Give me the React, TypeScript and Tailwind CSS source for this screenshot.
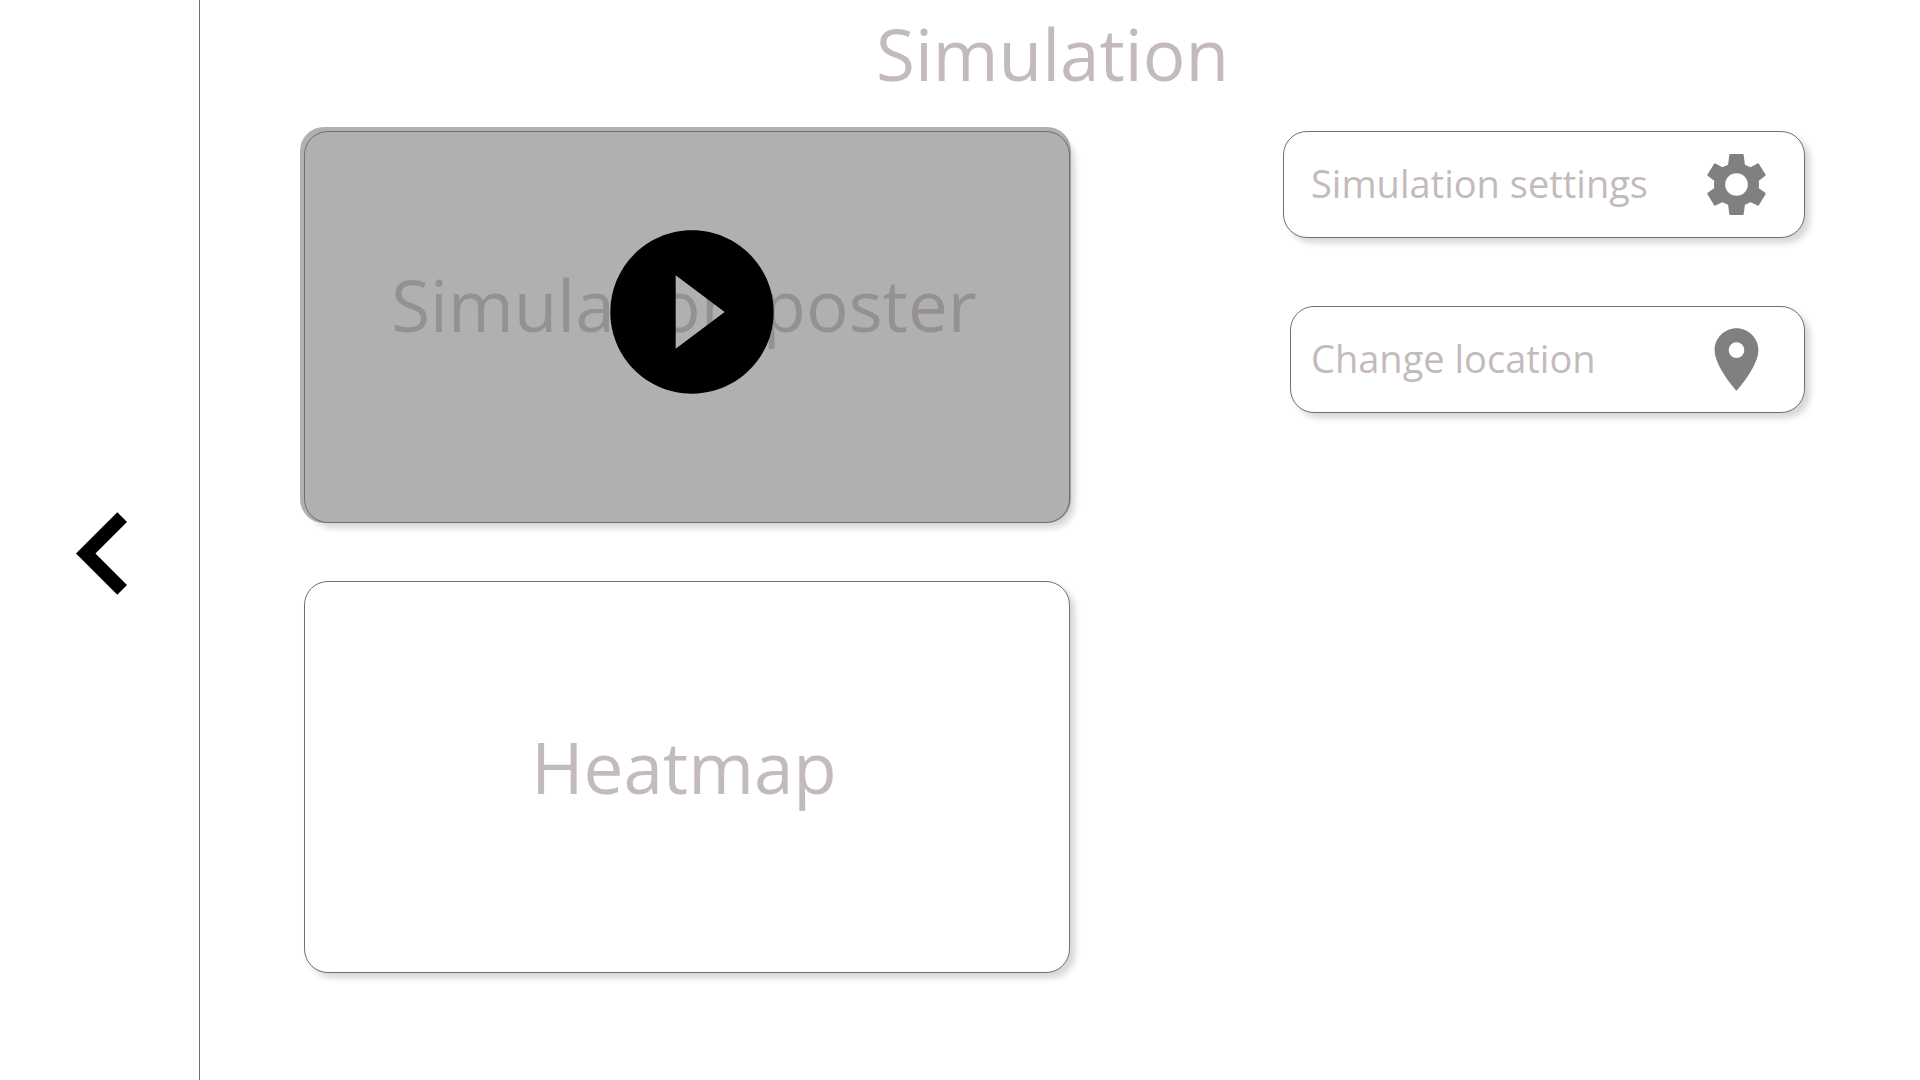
import { MdLocationOn, MdPlayCircleFilled } from "react-icons/md";

const card =
  "rounded-3xl border border-[#707070] bg-white shadow-[5px_5px_6px_rgba(0,0,0,0.16)]";

function GearIcon() {
  return (
    <svg viewBox="0 0 177 183" className="h-[61px] w-[59px] text-[#808080]" aria-hidden="true">
      <path
        fill="currentColor"
        stroke="currentColor"
        strokeWidth="6"
        strokeLinejoin="round"
        fillRule="evenodd"
        d="M70 3H107L111 34Q121 38 131 43L153 31L173 63L152 79Q154 91 152 104L173 119L153 152L131 141Q122 147 111 150L107 180H70L66 150Q55 147 46 141L24 152L4 119L25 104Q23 91 25 79L4 63L24 31L46 43Q56 38 66 34ZM88.500 54.500A37 37 0 1 0 88.500 128.500A37 37 0 1 0 88.500 54.500Z"
      />
    </svg>
  );
}

export default function App() {
  return (
    <div className="flex min-h-screen bg-white font-['Open_Sans','Noto_Sans',sans-serif] text-[#c3bbbb]">
      <nav className="flex w-[200px] shrink-0 justify-center border-r border-[#707070] pt-[512px] pl-[4px]">
        <button type="button" aria-label="Back" className="h-[83px] w-[51px] text-black">
          <svg viewBox="8 6 7.41 12" className="h-full w-full" fill="currentColor" aria-hidden="true">
            <path d="M15.41 7.41 14 6l-6 6 6 6 1.41-1.41L10.83 12z" />
          </svg>
        </button>
      </nav>

      <main className="flex-1 pr-[115px] pl-[104px]">
        <h1 className="h-[131px] pt-[4px] pr-[4px] text-center text-[71px] leading-[100px]">
          Simulation
        </h1>

        <div className="grid grid-cols-[766fr_522fr] items-start gap-x-[213px]">
          <div className="flex flex-col gap-[58px]">
            <section className={`relative flex h-[392px] items-center justify-center ${card}`}>
              <h2 className="pr-[6px] pb-[44px] text-[71px] leading-[100px]">Simulation poster</h2>
              <div className="absolute -top-[5px] -right-[2px] -bottom-px -left-[5px] rounded-3xl bg-[#707070]/55" />
              <button
                type="button"
                aria-label="Play simulation"
                className="absolute top-[82px] left-1/2 -ml-[93px] text-black"
              >
                <MdPlayCircleFilled className="size-[196px]" />
              </button>
            </section>

            <section className={`flex h-[392px] items-center justify-center ${card}`}>
              <h2 className="pr-[6px] pb-[20px] text-[71px] leading-[100px]">Heatmap</h2>
            </section>
          </div>

          <div className="flex flex-col gap-[68px]">
            <button
              type="button"
              className={`flex h-[107px] items-center justify-between pr-[38px] pl-[27px] text-[38px] ${card}`}
            >
              <span className="pb-[2px]">Simulation settings</span>
              <GearIcon />
            </button>
            <button
              type="button"
              className={`ml-[7px] flex h-[107px] items-center justify-between pr-[30px] pl-[20px] text-[38px] ${card}`}
            >
              <span className="pb-[2px]">Change location</span>
              <MdLocationOn className="size-[75px] text-[#808080]" />
            </button>
          </div>
        </div>
      </main>
    </div>
  );
}
